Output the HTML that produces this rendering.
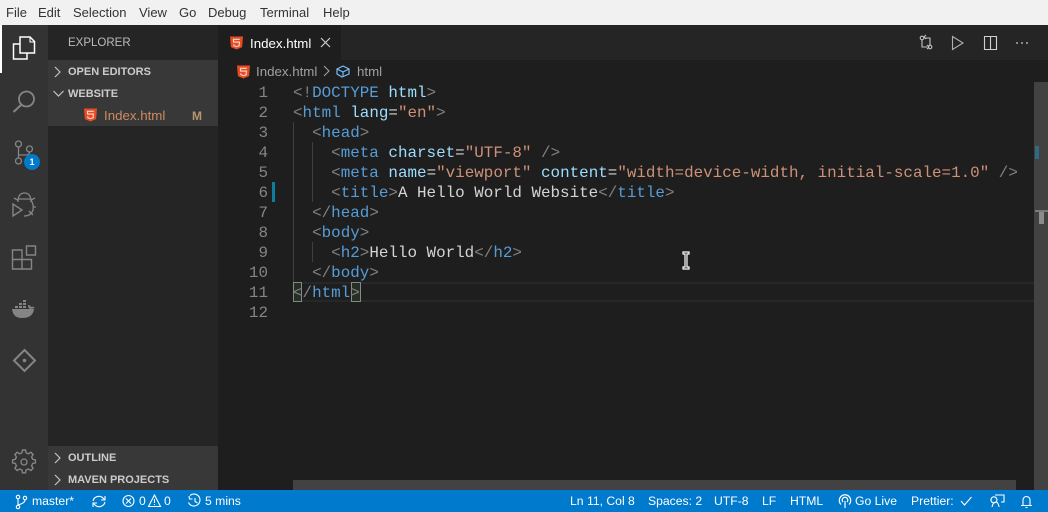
<!DOCTYPE html>
<html><head><meta charset="utf-8"><style>
html,body{margin:0;padding:0;width:1048px;height:512px;overflow:hidden;background:#1e1e1e}
*{box-sizing:border-box}
.a{position:absolute}
.t{position:absolute;white-space:pre;font-family:"Liberation Sans",sans-serif;font-size:13.300px}
.m{position:absolute;left:0;color:#333;line-height:25px;top:0;font-size:13px}
.h{color:#ccc;font-weight:bold;font-size:11px;line-height:22px;margin-top:1px}
.st{color:#fff;font-size:12.200px;line-height:22px;top:490px}
.ln{position:absolute;width:268px;left:0;text-align:right;font:15.9px/20px "Liberation Mono",monospace;color:#858585;margin-top:1px}
.c{position:absolute;left:293px;white-space:pre;font:15.9px/20px "Liberation Mono",monospace;color:#d4d4d4;margin-top:1px}
i{font-style:normal}.g{color:#808080}.b{color:#569cd6}.v{color:#9cdcfe}.o{color:#ce9178}
.ig{position:absolute;width:1px;background:#404040}
svg{position:absolute;overflow:visible}
</style></head><body>
<div class="a" style="left:0;top:0;width:1048px;height:25px;background:#f1f1f1"></div>
<div class="t m" style="left:6px">File</div>
<div class="t m" style="left:38px">Edit</div>
<div class="t m" style="left:73px">Selection</div>
<div class="t m" style="left:139px">View</div>
<div class="t m" style="left:179px">Go</div>
<div class="t m" style="left:208px">Debug</div>
<div class="t m" style="left:260px">Terminal</div>
<div class="t m" style="left:323px">Help</div>

<div class="a" style="left:0;top:25px;width:48px;height:465px;background:#333"></div>
<div class="a" style="left:0;top:25px;width:2px;height:48px;background:#fff"></div>
<div class="a" style="left:48px;top:25px;width:170px;height:465px;background:#252526"></div>
<div class="a" style="left:48px;top:60px;width:170px;height:66px;background:#383838"></div>
<div class="a" style="left:48px;top:446px;width:170px;height:44px;background:#383838"></div>
<div class="t" style="left:68px;top:26px;line-height:35px;font-size:11.500px;color:#bbb">EXPLORER</div>
<div class="t h" style="left:68px;top:60px">OPEN EDITORS</div>
<div class="t h" style="left:68px;top:82px">WEBSITE</div>
<div class="t h" style="left:68px;top:446px">OUTLINE</div>
<div class="t h" style="left:68px;top:468px">MAVEN PROJECTS</div>
<svg style="left:0;top:0" width="218" height="490" fill="none" stroke="#c5c5c5" stroke-width="1.200">
<path d="M55 67l5 5-5 5M53.500 91l5 5 5-5M55 453l5 5-5 5M55 475l5 5-5 5"/></svg>
<svg style="left:84px;top:108px" width="13" height="14" viewBox="0 0 14 14"><path d="M0 0h14l-1 11.500-6 2.500-6-2.500z" fill="#e44d26"/><path d="M10.500 3H3.700l.2 3h6.300l-.4 4L7 11l-2.800-1-.1-1.500" fill="none" stroke="#ffd9cc" stroke-width="1.200"/></svg>
<div class="t" style="left:104px;top:105px;line-height:22px;color:#d08a60">Index.html</div>
<div class="t" style="left:192px;top:105px;line-height:22px;color:#b8966f;font-size:12px;font-weight:bold">M</div>

<!-- activity icons -->
<svg style="left:0;top:25px" width="48" height="465" fill="none" stroke="#858585" stroke-width="1.300">
<path d="M20 12h10l4.500 4.500V28H20z M20 19h-6.500v15H27v-6" stroke="#fff" stroke-width="1.500"/>
<path d="M30 12v5h4.500" stroke="#fff" stroke-width="1"/>
<circle cx="26.500" cy="74" r="7.500" stroke-width="1.800"/><path d="M21 80l-7.500 7" stroke-width="2"/>
<circle cx="18.500" cy="119" r="3"/><circle cx="18.500" cy="136" r="3"/><circle cx="29.500" cy="124" r="3"/>
<path d="M18.500 122v11M19 130h7q3.500 0 3.500-3"/>
<path d="M13 179v12l9-6z" stroke-width="1.400"/>
<path d="M18 177q0-9 6.500-9t6.500 9M18.500 174h12M31 175q3 5 2 10-2 6-9 6M14 173l3.500 2M35 173l-4 2M36 182h-3M33 190l-4-4" stroke-width="1.300"/>
<path d="M12.500 225h9.500v9.500h-9.500zM12.500 234.500h9.500v9.500h-9.500zM22 234.500h9.500v9.500H22zM26.500 221h9v9h-9z" stroke-width="1.400"/>
<path d="M12 284h22q-1 9-12 9-9 0-10-9z" fill="#858585" stroke="none"/>
<path d="M15 281h3v2h-3zM19 281h3v2h-3zM23 281h3v2h-3zM19 278h3v2h-3zM23 278h3v2h-3zM23 275h3v2h-3zM28 280q0 3 2 4l5-1q-2-2-4-1-1-2-3-2z" fill="#858585" stroke="none"/>
<path d="M24.500 325l10.500 10.500-10.500 10.500-10.500-10.500z" stroke-width="2"/><circle cx="24.500" cy="335.500" r="1.800" fill="#858585" stroke="none"/>
<g transform="translate(1 1)"><path d="M21.500 424h3l.6 2.800 2.400 1 2.400-1.500 2.200 2.200-1.500 2.400 1 2.400 2.800.6v3l-2.800.6-1 2.400 1.500 2.400-2.200 2.200-2.400-1.500-2.400 1-.6 2.800h-3l-.6-2.800-2.400-1-2.400 1.500-2.200-2.200 1.500-2.400-1-2.400-2.800-.6v-3l2.800-.6 1-2.400-1.500-2.400 2.200-2.200 2.400 1.500 2.400-1z" stroke-width="1.400"/><circle cx="23" cy="436" r="3"/></g>
</svg>
<div class="a" style="left:24px;top:154px;width:16px;height:16px;border-radius:8px;background:#007acc;color:#fff;font:bold 9px/16px 'Liberation Sans',sans-serif;text-align:center">1</div>

<!-- tabs -->
<div class="a" style="left:218px;top:25px;width:830px;height:35px;background:#252526"></div>
<div class="a" style="left:218px;top:25px;width:123px;height:35px;background:#1e1e1e"></div>
<svg style="left:230px;top:36px" width="13" height="14" viewBox="0 0 14 14"><path d="M0 0h14l-1 11.500-6 2.500-6-2.500z" fill="#e44d26"/><path d="M10.500 3H3.700l.2 3h6.300l-.4 4L7 11l-2.800-1-.1-1.500" fill="none" stroke="#ffd9cc" stroke-width="1.200"/></svg>
<div class="t" style="left:250px;top:26px;line-height:35px;color:#fff">Index.html</div>
<svg style="left:321px;top:38px" width="9" height="9" fill="none" stroke="#ccc" stroke-width="1.200"><path d="M0 0l9 9M9 0L0 9"/></svg>
<svg style="left:0;top:0" width="1048" height="60" fill="none" stroke="#c5c5c5" stroke-width="1.100">
<circle cx="922" cy="38" r="1.800"/><circle cx="930" cy="47" r="1.800"/><path d="M922 40v7h5M930 45v-7h-5M926 35l-2 2 2 2M927 45l2 2-2 2" />
<path d="M952.500 36.500v13l10.500-6.500z" stroke="#b0b0b0"/>
<path d="M984.500 36.500h12v13h-12zM990.500 36.500v13" stroke="#d0d0d0"/>
<path d="M1016 43h2M1021 43h2M1026 43h2" stroke-width="1.300"/></svg>

<!-- breadcrumbs -->
<svg style="left:237px;top:65px" width="13" height="14" viewBox="0 0 14 14"><path d="M0 0h14l-1 11.500-6 2.500-6-2.500z" fill="#e44d26"/><path d="M10.500 3H3.700l.2 3h6.300l-.4 4L7 11l-2.800-1-.1-1.500" fill="none" stroke="#ffd9cc" stroke-width="1.200"/></svg>
<div class="t" style="left:256px;top:61px;line-height:22px;color:#a0a0a0">Index.html</div>
<svg style="left:324px;top:66px" width="60" height="12" fill="none" stroke="#a0a0a0" stroke-width="1.100"><path d="M0 0l5 5-5 5"/>
<path d="M13 4l6-3 6 3v5l-7 3-5-3zM13 4l6 3 6-3M19 7v5" stroke="#75beff" stroke-width="1.200" transform="translate(0 -1)"/></svg>
<div class="t" style="left:357px;top:61px;line-height:22px;color:#a0a0a0">html</div>

<!-- current line -->
<div class="a" style="left:293px;top:282px;width:741px;height:20px;border-top:2px solid #272727;border-bottom:2px solid #272727"></div>
<div class="a" style="left:293px;top:282px;width:9px;height:20px;background:#233023;border:1px solid #888"></div>
<div class="a" style="left:351px;top:282px;width:10px;height:20px;background:#233023;border:1px solid #888"></div>
<div class="a" style="left:272px;top:182px;width:3px;height:20px;background:#0c7d9d"></div>
<div class="ig" style="left:293px;top:122px;height:160px"></div>
<div class="ig" style="left:312px;top:142px;height:60px"></div>
<div class="ig" style="left:312px;top:242px;height:20px"></div>

<div class="ln" style="top:82px">1</div><div class="ln" style="top:102px">2</div><div class="ln" style="top:122px">3</div><div class="ln" style="top:142px">4</div><div class="ln" style="top:162px">5</div><div class="ln" style="top:182px">6</div><div class="ln" style="top:202px">7</div><div class="ln" style="top:222px">8</div><div class="ln" style="top:242px">9</div><div class="ln" style="top:262px">10</div><div class="ln" style="top:282px">11</div><div class="ln" style="top:302px">12</div>

<div class="c" style="top:82px"><i class="g">&lt;!</i><i class="b">DOCTYPE</i> <i class="v">html</i><i class="g">&gt;</i></div>
<div class="c" style="top:102px"><i class="g">&lt;</i><i class="b">html</i> <i class="v">lang</i>=<i class="o">"en"</i><i class="g">&gt;</i></div>
<div class="c" style="top:122px">  <i class="g">&lt;</i><i class="b">head</i><i class="g">&gt;</i></div>
<div class="c" style="top:142px">    <i class="g">&lt;</i><i class="b">meta</i> <i class="v">charset</i>=<i class="o">"UTF-8"</i> <i class="g">/&gt;</i></div>
<div class="c" style="top:162px">    <i class="g">&lt;</i><i class="b">meta</i> <i class="v">name</i>=<i class="o">"viewport"</i> <i class="v">content</i>=<i class="o">"width=device-width, initial-scale=1.0"</i> <i class="g">/&gt;</i></div>
<div class="c" style="top:182px">    <i class="g">&lt;</i><i class="b">title</i><i class="g">&gt;</i>A Hello World Website<i class="g">&lt;/</i><i class="b">title</i><i class="g">&gt;</i></div>
<div class="c" style="top:202px">  <i class="g">&lt;/</i><i class="b">head</i><i class="g">&gt;</i></div>
<div class="c" style="top:222px">  <i class="g">&lt;</i><i class="b">body</i><i class="g">&gt;</i></div>
<div class="c" style="top:242px">    <i class="g">&lt;</i><i class="b">h2</i><i class="g">&gt;</i>Hello World<i class="g">&lt;/</i><i class="b">h2</i><i class="g">&gt;</i></div>
<div class="c" style="top:262px">  <i class="g">&lt;/</i><i class="b">body</i><i class="g">&gt;</i></div>
<div class="c" style="top:282px"><i class="g">&lt;/</i><i class="b">html</i><i class="g">&gt;</i></div>

<!-- I-beam -->
<svg style="left:682px;top:251px" width="8" height="19"><path d="M1 1h6v2H5v13h2v2H1v-2h2V3H1z" fill="#222" stroke="#fff" stroke-width="1.200"/></svg>

<!-- scrollbars -->
<div class="a" style="left:1034px;top:82px;width:14px;height:408px;background:#424242"></div>
<div class="a" style="left:1035px;top:146px;width:4px;height:13px;background:#2f6a83"></div>
<div class="a" style="left:1035px;top:210px;width:13px;height:2px;background:#7a7a7a"></div>
<div class="a" style="left:1039px;top:212px;width:5px;height:12px;background:#8c8c8c"></div>
<div class="a" style="left:293px;top:480px;width:723px;height:10px;background:#424242"></div>

<!-- status bar -->
<div class="a" style="left:0;top:490px;width:1048px;height:22px;background:#007acc"></div>
<svg style="left:0;top:490px" width="1048" height="22" fill="none" stroke="#fff" stroke-width="1.100">
<circle cx="18" cy="7" r="1.700"/><circle cx="18" cy="17" r="1.700"/><circle cx="25" cy="8" r="1.700"/><path d="M18 9v6M25 10q0 3-7 5"/>
<path d="M93 11a6 6 0 0 1 10-3l2 2M105 12a6 6 0 0 1-10 3l-2-2M105 6v4h-4M93 17v-4h4"/>
<circle cx="128.500" cy="11" r="5.500"/><path d="M126 8.500l5 5M131 8.500l-5 5"/>
<path d="M154.500 5l6 11.500h-12zM154.500 9v4M154.500 14v1"/>
<path d="M190 5.500a6 6 0 1 1-1.500 7M189 6l.5 3h3M195 8v3.500l2.500 1.500"/>
<path d="M841 14.500a5.700 5.700 0 1 1 8 0M843 12a2.800 2.800 0 1 1 4 0M845 11v7" stroke-width="1.200"/>
<path d="M961 11l3.500 4 7-8"/>
<path d="M992 17q1-5 4-5a3 3 0 1 1 .1-.1q2 .5 3 5M995 5h9v7h-3" />
<path d="M1021 15.500h11M1023 15V10a3.500 3.500 0 0 1 7 0v5M1025.500 17.500h2"/></svg>
<div class="t st" style="left:32px">master*</div>
<div class="t st" style="left:139px">0</div>
<div class="t st" style="left:164px">0</div>
<div class="t st" style="left:205px">5 mins</div>
<div class="t st" style="left:570px">Ln 11, Col 8</div>
<div class="t st" style="left:648px">Spaces: 2</div>
<div class="t st" style="left:714px">UTF-8</div>
<div class="t st" style="left:762px">LF</div>
<div class="t st" style="left:790px">HTML</div>
<div class="t st" style="left:855px">Go Live</div>
<div class="t st" style="left:911px">Prettier:</div>
</body></html>
